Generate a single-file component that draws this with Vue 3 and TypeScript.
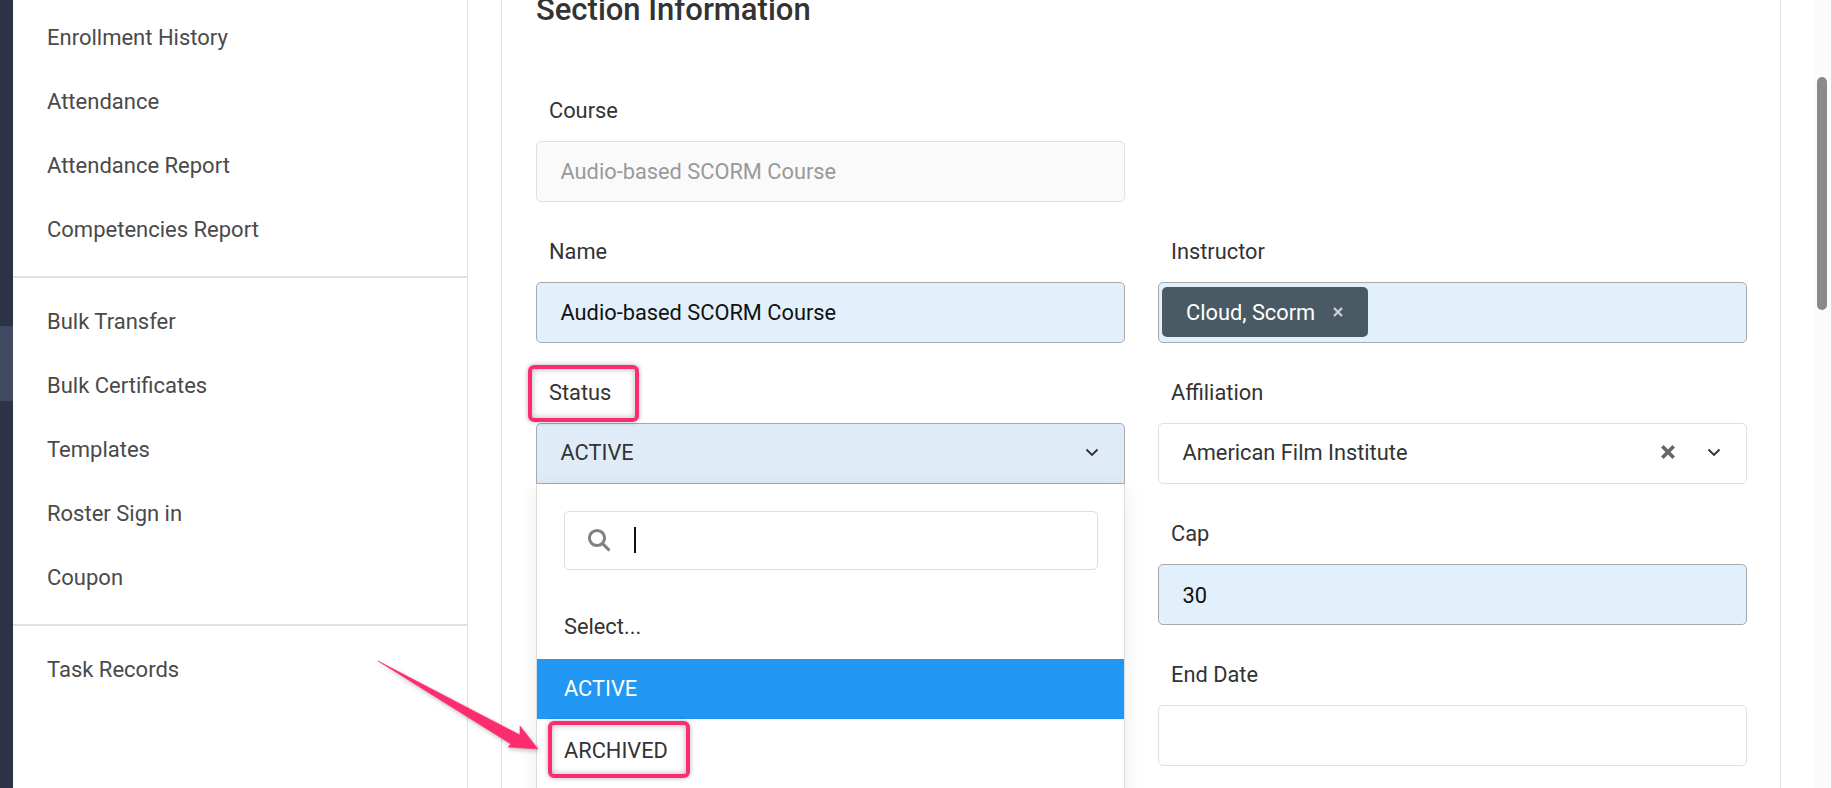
<script setup lang="ts">
const groups: string[][] = [
  ['Enrollment History', 'Attendance', 'Attendance Report', 'Competencies Report'],
  ['Bulk Transfer', 'Bulk Certificates', 'Templates', 'Roster Sign in', 'Coupon'],
  ['Task Records'],
]
</script>

<template>
  <div class="page">
    <div class="rail">
      <div class="rail-top"></div>
      <div class="rail-active"></div>
      <div class="rail-rest"></div>
    </div>

    <aside class="side">
      <ul v-for="(group, i) in groups" :key="i" class="group">
        <li v-for="item in group" :key="item">{{ item }}</li>
      </ul>
    </aside>

    <main class="card">
      <h2 class="title">Section Information</h2>
      <div class="form">
        <div class="field">
          <label>Course</label>
          <div class="control disabled">Audio-based SCORM Course</div>
        </div>
        <div class="field"></div>

        <div class="field">
          <label>Name</label>
          <div class="control filled dark">Audio-based SCORM Course</div>
        </div>
        <div class="field">
          <label>Instructor</label>
          <div class="control filled chips">
            <span class="chip">Cloud, Scorm<svg class="chip-x" viewBox="0 0 10 10"><path d="M1 1l8 8M9 1 1 9" /></svg></span>
          </div>
        </div>

        <div class="field status">
          <label>Status</label>
          <div class="control select-open">
            <span>ACTIVE</span>
            <svg class="chev" viewBox="0 0 14 9"><path d="M1.5 1.5 7 7l5.5-5.5" /></svg>
          </div>
          <div class="menu">
            <div class="search">
              <svg class="mag" viewBox="0 0 24 24"><circle cx="10" cy="10" r="7.6" /><path d="m15.6 15.6 6 6" /></svg>
              <span class="caret"></span>
            </div>
            <div class="opt">Select...</div>
            <div class="opt on">ACTIVE</div>
            <div class="opt">ARCHIVED</div>
          </div>
        </div>
        <div class="field">
          <label>Affiliation</label>
          <div class="control plain raised">
            <span class="grow">American Film Institute</span>
            <svg class="clear" viewBox="0 0 14 14"><path d="M2 2l10 10M12 2 2 12" /></svg>
            <svg class="chev" viewBox="0 0 14 9"><path d="M1.5 1.5 7 7l5.5-5.5" /></svg>
          </div>
        </div>

        <div class="field"></div>
        <div class="field">
          <label>Cap</label>
          <div class="control filled dark lowered">30</div>
        </div>

        <div class="field"></div>
        <div class="field">
          <label>End Date</label>
          <div class="control plain"></div>
        </div>
      </div>
    </main>

    <div class="scrollbar"><div class="thumb"></div></div>

    <div class="mark mark-status"></div>
    <div class="mark mark-archived"></div>
    <svg class="arrow" viewBox="0 0 180 100" width="180" height="100">
      <path d="M1 1 L 143 75 L 143 66 L 161 89 L 131 87 L 134 84 Z" />
    </svg>
  </div>
</template>

<style>
html, body { margin: 0; background: #fff; overflow: hidden; }
</style>

<style scoped>
.page {
  position: relative;
  display: flex;
  width: 1832px;
  height: 788px;
  overflow: hidden;
  background: #fff;
  font-family: Roboto, "Liberation Sans", sans-serif;
  font-size: 21.8px;
  color: #333;
}
.rail { width: 13px; flex: none; display: flex; flex-direction: column; }
.rail-top { height: 326px; background: #2b3345; }
.rail-active { height: 75px; background: #3f4a60; }
.rail-rest { flex: 1; background: #2b3345; }

.side {
  width: 455px;
  flex: none;
  box-sizing: border-box;
  border-right: 1px solid #e2e2e2;
  margin-right: 33px;
}
.group { list-style: none; margin: 0; padding: 0 0 15px; border-bottom: 2px solid #e2e2e2; }
.group:first-child { margin-top: 5px; }
.group + .group { padding-top: 11px; }
.group:last-child { border-bottom: 0; }
.group li { height: 64px; line-height: 66px; padding-left: 34px; color: #4a4a4a; font-size: 22px; }

.card {
  flex: none;
  width: 1280px;
  box-sizing: border-box;
  padding: 0 33px 0 34px;
  border-left: 1px solid #e2e2e2;
  border-right: 1px solid #e2e2e2;
}
.title {
  margin: -13px 0 0;
  height: 73px;
  font-size: 31px;
  line-height: 46px;
  font-weight: 500;
  color: #333;
}
.form {
  display: grid;
  grid-template-columns: 589px 589px;
  column-gap: 33px;
  grid-auto-rows: 141px;
}
.field { position: relative; }
.field label {
  display: block;
  height: 81px;
  box-sizing: border-box;
  padding: 39px 0 0 13px;
  line-height: 24px;
}
.control {
  box-sizing: border-box;
  height: 60.5px;
  border-radius: 5px;
  display: flex;
  align-items: center;
  padding: 0 24px 0 23.5px;
  border: 1px solid #e0e0e0;
}
.disabled { background: #fafafa; color: #999; }
.filled { background: #e2f0fb; border-color: #a6a9ad; }
.dark { color: #111; }
.raised { padding-bottom: 2px; }
.lowered { padding-top: 2px; }
.chips { padding: 0 3px; }
.chip {
  display: inline-flex;
  align-items: center;
  height: 50px;
  width: 206px;
  box-sizing: border-box;
  padding-left: 24px;
  border-radius: 5px;
  background: #495a65;
  color: #fff;
}
.chip-x { width: 10px; height: 10px; margin-left: 18px; fill: none; stroke: #c8ced2; stroke-width: 2.4; }
.select-open {
  background: #dfecf8;
  border-color: #a6a9ad;
  border-radius: 5px 5px 0 0;
  justify-content: space-between;
  padding-right: 25px;
  padding-bottom: 2px;
}
.plain { background: #fff; }
.grow { flex: 1; }
.chev { width: 14px; height: 9px; fill: none; stroke: #333; stroke-width: 1.9; }
.plain .chev { margin-right: 1px; margin-left: 31px; }
.clear { width: 16px; height: 16px; fill: none; stroke: #666; stroke-width: 3.2; }

.menu {
  position: absolute;
  top: 141.5px;
  left: 0;
  width: 589px;
  height: 330px;
  box-sizing: border-box;
  padding-top: 27px;
  background: #fff;
  border: 1px solid #ddd;
  border-top: 0;
  box-shadow: 0 4px 18px rgba(0, 0, 0, 0.08);
  z-index: 2;
}
.search {
  box-sizing: border-box;
  height: 59px;
  margin: 0 26px 29.5px 27px;
  border: 1px solid #dedede;
  border-radius: 5px;
  display: flex;
  align-items: center;
  padding-left: 22px;
}
.mag { width: 24px; height: 24px; fill: none; stroke: #808080; stroke-width: 3; stroke-linecap: round; }
.caret { width: 1.5px; height: 26px; margin-left: 23px; background: #111; }
.opt { height: 60px; line-height: 60px; padding-left: 27px; color: #333; }
.opt:nth-child(2) { line-height: 55px; }
.opt:last-child { line-height: 64px; }
.opt.on { background: #2196f3; color: #fff; }

.scrollbar {
  width: 17px;
  margin-left: 33px;
  height: 100%;
  background: #fbfbfb;
  border-right: 1px solid #f7c6d6;
  flex: none;
}
.thumb {
  width: 10px;
  height: 233px;
  margin: 77px 0 0 3px;
  border-radius: 5px;
  background: #8a8a8a;
}

.mark {
  position: absolute;
  box-sizing: border-box;
  border: 4px solid #fb2d6e;
  border-radius: 6px;
  box-shadow: 0 0 5px rgba(0, 0, 0, 0.3), inset 0 0 6px rgba(0, 0, 0, 0.3);
  z-index: 3;
}
.mark-status { left: 527.5px; top: 364.5px; width: 111px; height: 57px; }
.mark-archived { left: 548px; top: 721px; width: 142px; height: 57px; }
.arrow {
  position: absolute;
  left: 377px;
  top: 660px;
  fill: #fb2d6e;
  stroke: #fb2d6e;
  stroke-width: 0.6;
  stroke-linejoin: round;
  filter: drop-shadow(1px 2px 2px rgba(0, 0, 0, 0.25));
  z-index: 3;
}
</style>
